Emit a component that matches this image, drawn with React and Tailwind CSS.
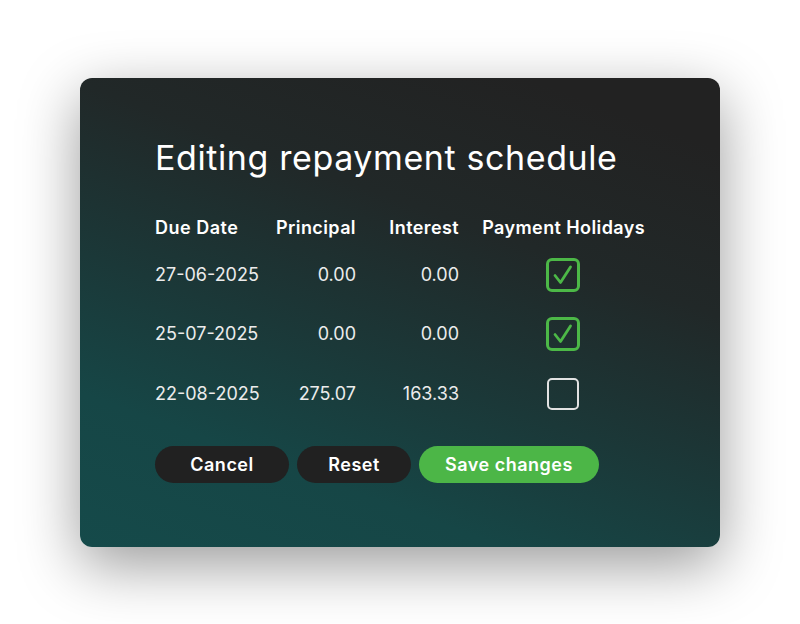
const rows = [
  { date: '27-06-2025', principal: '0.00', interest: '0.00', holiday: true, h: 'h-[58px]' },
  { date: '25-07-2025', principal: '0.00', interest: '0.00', holiday: true, h: 'h-[60px]' },
  { date: '22-08-2025', principal: '275.07', interest: '163.33', holiday: false, h: 'h-[60px]' },
];

const Checkbox = ({ checked }) =>
  checked ? (
    <svg width="34" height="34" viewBox="0 0 34 34" fill="none">
      <rect x="1.5" y="1.5" width="31" height="31" rx="4.5" stroke="#4cb847" strokeWidth="3" />
      <path d="M9 17.5 L14.5 24.5 L24.5 9" stroke="#4cb847" strokeWidth="2.8" strokeLinecap="round" strokeLinejoin="round" />
    </svg>
  ) : (
    <svg width="34" height="34" viewBox="0 0 34 34" fill="none">
      <rect x="2" y="2" width="30" height="30" rx="4" stroke="#e2e2e2" strokeWidth="2" />
    </svg>
  );

export default function App() {
  return (
    <div
      className="flex min-h-screen items-center justify-center bg-white"
      style={{ fontFamily: 'Inter, "Noto Sans", sans-serif' }}
    >
      <div className="w-[640px] h-[469px] rounded-[12px] bg-[linear-gradient(20deg,#154a4a_0%,#164646_22%,#1b3838_42%,#212828_66%,#222222_90%)] px-[75px] pt-[60px] shadow-[0_18px_60px_rgba(0,0,0,0.4)]">
        <h1 className="text-[34px] leading-[40px] font-normal tracking-[0.6px] text-white">
          Editing repayment schedule
        </h1>

        <div className="mt-8 grid grid-cols-[122px_79px_103px_186px] text-[18px] text-[#ececec]">
          <div className="flex h-9 items-center font-semibold tracking-[0.5px] text-white whitespace-nowrap">Due Date</div>
          <div className="flex h-9 items-center justify-end font-semibold tracking-[0.4px] text-white whitespace-nowrap">Principal</div>
          <div className="flex h-9 items-center justify-end font-semibold tracking-[0.4px] text-white">Interest</div>
          <div className="flex h-9 items-center justify-end font-semibold tracking-[0.4px] text-white whitespace-nowrap">
            Payment Holidays
          </div>

          {rows.map((r) => (
            <div key={r.date} className="contents">
              <div className={`flex items-center ${r.h}`}>{r.date}</div>
              <div className={`flex items-center justify-end ${r.h}`}>{r.principal}</div>
              <div className={`flex items-center justify-end ${r.h}`}>{r.interest}</div>
              <div className={`flex items-center justify-center pl-[22px] ${r.h}`}>
                <Checkbox checked={r.holiday} />
              </div>
            </div>
          ))}
        </div>

        <div className="mt-[22px] flex gap-2 text-[18px] font-semibold tracking-[0.5px]">
          <button className="h-[37px] w-[134px] rounded-full bg-[#212121] text-white">Cancel</button>
          <button className="h-[37px] w-[114px] rounded-full bg-[#212121] text-white">Reset</button>
          <button className="h-[37px] w-[180px] rounded-full bg-[#4cb647] text-white">Save changes</button>
        </div>
      </div>
    </div>
  );
}
